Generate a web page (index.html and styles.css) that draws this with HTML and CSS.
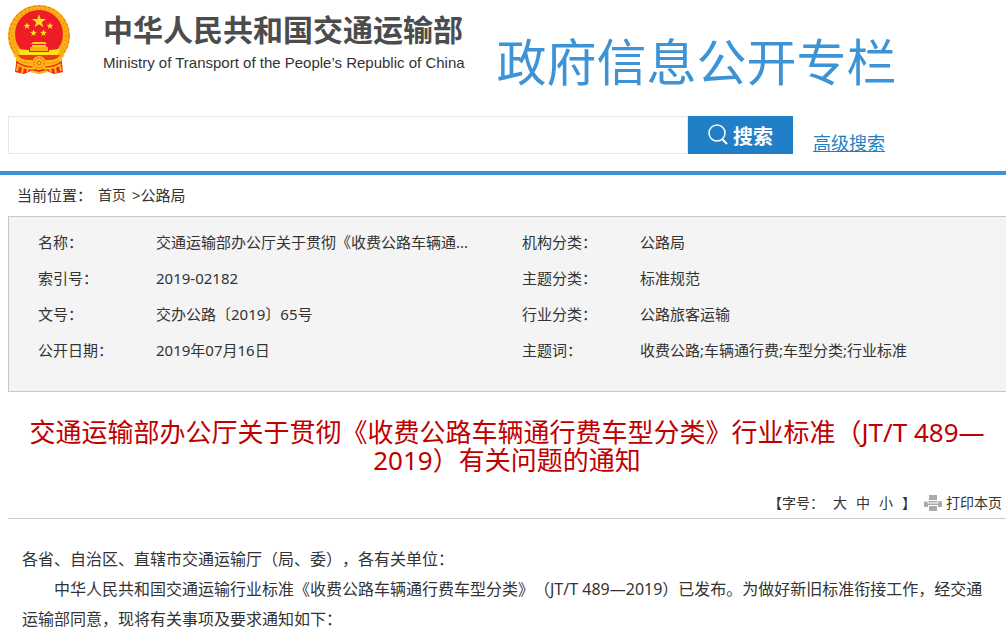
FILE: index.html
```html
<!DOCTYPE html>
<html lang="zh-CN">
<head>
    <meta charset="UTF-8">
    <meta name="viewport" content="width=device-width, initial-scale=1.0">
    <title>中华人民共和国交通运输部 - 政府信息公开专栏</title>
    <link rel="stylesheet" href="styles.css">
</head>
<body>
    <header class="header">
        <div class="brand">
            <svg class="emblem" viewBox="0 0 64 70" aria-hidden="true">
                <path d="M10 50 H54 L56 67 L47 69 L40 66 L32 69 L24 66 L17 69 L8 67 Z" fill="#ee2a1c"/>
                <circle cx="32" cy="31" r="31" fill="#fbb012"/>
                <circle cx="32" cy="31" r="30" fill="none" stroke="#f0641a" stroke-width="1" stroke-dasharray="3 2"/>
                <circle cx="32" cy="31" r="27" fill="none" stroke="#f58a14" stroke-width="2" stroke-dasharray="1 3"/>
                <circle cx="32" cy="29" r="24" fill="#ee1c25"/>
                <g fill="#ffe11a">
                    <path d="M32 9 L33.700 14 L39 14.100 L34.800 17.300 L36.300 22.300 L32 19.300 L27.700 22.300 L29.200 17.300 L25 14.100 L30.300 14 Z"/>
                    <path d="M20 17.500 l.9 2.300 2.500.1-2 1.600.7 2.400-2.100-1.400-2.100 1.400.7-2.400-2-1.600 2.500-.1z"/>
                    <path d="M43 17.500 l.9 2.300 2.500.1-2 1.600.7 2.400-2.100-1.400-2.100 1.400.7-2.400-2-1.600 2.500-.1z"/>
                    <path d="M26.500 24.500 l.9 2.300 2.500.1-2 1.600.7 2.400-2.100-1.400-2.100 1.400.7-2.400-2-1.600 2.500-.1z"/>
                    <path d="M36.500 24.500 l.9 2.300 2.500.1-2 1.600.7 2.400-2.100-1.400-2.100 1.400.7-2.400-2-1.600 2.500-.1z"/>
                </g>
                <path d="M26 37 H38 L40 39 H24 Z M25 40 H39 V42 H25 Z" fill="#ffd21a"/>
                <path d="M23 42 H41 V46 H23 Z" fill="#fbb012"/>
                <path d="M11 44 L22 45 V47 H42 V45 L53 44 L51 50 H13 Z" fill="#ffe11a"/>
                <path d="M11 50 H53 L48 56 H16 Z" fill="#f03a1a"/>
                <path d="M7 50 Q14 57 25 56 M9 54 Q17 61 27 60 M10 59 Q19 65 28 63 M57 50 Q50 57 39 56 M55 54 Q47 61 37 60 M54 59 Q45 65 36 63 M11 61 L10 66 M16 63 L15 68 M21 64 L20 67 M53 61 L54 66 M48 63 L49 68 M43 64 L44 67 M24 66 L32 68 L40 66" fill="none" stroke="#fdbe14" stroke-width="2"/>
                <circle cx="32" cy="58" r="7" fill="#fdbe14"/>
                <circle cx="32" cy="58" r="5" fill="none" stroke="#f0501a" stroke-width="1" stroke-dasharray="2 1"/>
                <circle cx="32" cy="58" r="2" fill="none" stroke="#f0501a" stroke-width="1"/>
            </svg>
            <div class="brand-text">
                <div class="brand-name">中华人民共和国交通运输部</div>
                <div class="brand-en">Ministry of Transport of the People’s Republic of China</div>
            </div>
        </div>
        <div class="column-name">政府信息公开专栏</div>
    </header>

    <form class="search">
        <input class="search-input" type="text" aria-label="搜索">
        <button class="search-button" type="submit">
            <svg class="search-icon" viewBox="0 0 22 22" aria-hidden="true">
                <circle cx="10" cy="9" r="8" fill="none" stroke="#fff" stroke-width="1.500"/>
                <path d="M15 15 L20 20" stroke="#fff" stroke-width="2"/>
            </svg>
            搜索
        </button>
        <a class="search-advanced" href="#">高级搜索</a>
    </form>

    <nav class="location">
        <span>当前位置：</span>
        <a class="location-home" href="#">首页</a>
        <span>&gt;<a href="#">公路局</a></span>
    </nav>

    <main class="main">
        <div class="info">
            <table class="info-table">
                <tr>
                    <th>名称：</th>
                    <td class="info-first">交通运输部办公厅关于贯彻《收费公路车辆通...</td>
                    <th>机构分类：</th>
                    <td>公路局</td>
                </tr>
                <tr>
                    <th>索引号：</th>
                    <td>2019-02182</td>
                    <th>主题分类：</th>
                    <td>标准规范</td>
                </tr>
                <tr>
                    <th>文号：</th>
                    <td>交办公路〔2019〕65号</td>
                    <th>行业分类：</th>
                    <td>公路旅客运输</td>
                </tr>
                <tr>
                    <th>公开日期：</th>
                    <td>2019年07月16日</td>
                    <th>主题词：</th>
                    <td>收费公路;车辆通行费;车型分类;行业标准</td>
                </tr>
            </table>
        </div>

        <h1 class="title">交通运输部办公厅关于贯彻《收费公路车辆通行费车型分类》行业标准（JT/T 489—2019）有关问题的通知</h1>

        <div class="tools">
            <div class="font-size">
                <span>【字号：</span>
                <a href="#">大</a>
                <a href="#">中</a>
                <a href="#">小</a>
                <span>】</span>
            </div>
            <a class="print" href="#">
                <svg class="print-icon" viewBox="0 0 18 16" aria-hidden="true">
                    <path d="M5 0 H13 V5 H5 Z M1 6 H17 L18 7 V12 H14 V10 H4 V12 H0 V7 Z M5 11 H13 V16 H5 Z" fill="#ababab"/>
                    <path d="M0 6 H4 V8 H14 V6" fill="none" stroke="#fff" stroke-width="1"/>
                </svg>
                打印本页
            </a>
        </div>

        <div class="article">
            <p>各省、自治区、直辖市交通运输厅（局、委），各有关单位：</p>
            <p class="indent">中华人民共和国交通运输行业标准《收费公路车辆通行费车型分类》（JT/T 489—2019）已发布。为做好新旧标准衔接工作，经交通运输部同意，现将有关事项及要求通知如下：</p>
        </div>
    </main>
</body>
</html>
```

FILE: styles.css
```css
body {
    margin: 0;
    font-family: "Noto Sans", "Noto Sans CJK SC", sans-serif;
    font-size: 15px;
    line-height: 24px;
    color: #333;
    background-color: #fff;
    text-spacing-trim: space-all;
}
a {
    color: inherit;
    text-decoration: none;
}
.header {
    display: flex;
    gap: 32px;
    height: 116px;
    padding-left: 7px;
    box-sizing: border-box;
}
.brand {
    display: flex;
    gap: 32px;
    padding-top: 5px;
}
.emblem {
    width: 64px;
    height: 70px;
}
.brand-text {
    padding-top: 4px;
    white-space: nowrap;
}
.brand-name {
    font-family: "Noto Sans CJK SC", sans-serif;
    font-size: 30px;
    font-weight: bold;
    line-height: 38px;
    color: #4c4c4c;
}
.brand-en {
    font-family: "Liberation Sans", Arial, sans-serif;
    font-size: 15px;
    line-height: 32px;
}
.column-name {
    padding-top: 23px;
    font-family: "Noto Sans CJK SC", sans-serif;
    font-size: 50px;
    line-height: 72px;
    color: #3c94d7;
    white-space: nowrap;
}
.search {
    display: flex;
    height: 55px;
    padding: 0 8px;
    border-bottom: 4px solid #3c94d7;
}
.search-input {
    flex: 0 1 680px;
    min-width: 0;
    height: 38px;
    padding: 0 10px;
    box-sizing: border-box;
    border: 1px solid #e6e6e6;
    font-size: 16px;
}
.search-button {
    display: flex;
    align-items: center;
    gap: 4px;
    height: 38px;
    padding: 0 20px 0 19px;
    border: none;
    background-color: #217fc7;
    color: #fff;
    font-family: "Noto Sans CJK SC", sans-serif;
    font-size: 20px;
    font-weight: bold;
    cursor: pointer;
}
.search-icon {
    width: 22px;
    height: 22px;
}
.search-advanced {
    margin-left: 20px;
    padding-top: 15px;
    font-size: 18px;
    color: #217fc7;
    text-decoration: underline;
}
.location {
    display: flex;
    gap: 6px;
    padding: 8px 17px 9px;
}
.location-home {
    font-size: 14px;
}
.main {
    padding-left: 8px;
}
.info {
    padding: 7px 0 23px 29px;
    border: 1px solid #c8c8c8;
    border-right: none;
    background-color: #f4f4f4;
}
.info-table {
    width: 100%;
    border-collapse: collapse;
    table-layout: fixed;
}
.info-table th {
    width: 118px;
}
.info-table th,
.info-table td {
    height: 36px;
    padding: 0;
    font-weight: normal;
    text-align: left;
}
.info-table .info-first {
    width: 366px;
}
.title {
    margin: 26px 8px 17px;
    font-size: 26px;
    font-weight: normal;
    line-height: 28px;
    text-align: center;
    color: #c00000;
}
.tools {
    display: flex;
    justify-content: flex-end;
    gap: 8px;
    padding: 0 4px 3px 0;
    border-bottom: 1px solid #c8c8c8;
    font-size: 14px;
}
.font-size {
    display: flex;
    gap: 9px;
}
.print {
    display: flex;
    align-items: center;
    gap: 4px;
}
.print-icon {
    width: 18px;
    height: 16px;
}
.article {
    padding: 25px 14px 0;
    font-size: 16px;
    line-height: 30px;
}
.article p {
    margin: 0;
}
.article .indent {
    text-indent: 2em;
}
```
